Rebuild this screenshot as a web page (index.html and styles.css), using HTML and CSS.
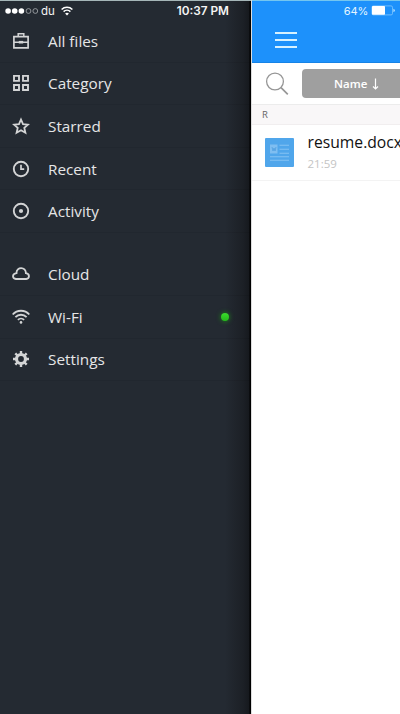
FILE: index.html
```
<!DOCTYPE html>
<html lang="en">
<head>
    <meta charset="UTF-8">
    <meta name="viewport" content="width=device-width, initial-scale=1.0">
    <title>Files</title>
    <link rel="stylesheet" href="styles.css">
</head>
<body>
    <div class="screen">
        <nav class="sidebar">
            <div class="status">
                <svg class="signal" width="34" height="8" viewBox="0 0 34 8">
                    <g fill="#fff">
                        <circle cx="3.1" cy="4" r="2.8"/>
                        <circle cx="9.7" cy="4" r="2.8"/>
                        <circle cx="16.4" cy="4" r="2.8"/>
                    </g>
                    <g fill="none" stroke="#a9adb1" stroke-width="0.8">
                        <circle cx="23.5" cy="4" r="2.4"/>
                        <circle cx="30.3" cy="4" r="2.4"/>
                    </g>
                </svg>
                <span class="carrier">du</span>
                <svg class="status-wifi" width="12" height="10" viewBox="0 0 12 10" fill="none" stroke="#fff" stroke-width="1.5">
                    <path d="M0.6 3.5C3.6 0.5 8.4 0.5 11.4 3.5"/>
                    <path d="M2.6 5.6C4.5 3.8 7.5 3.8 9.4 5.6"/>
                    <path d="M6 9.6L4.1 7.4C5.2 6.5 6.8 6.5 7.9 7.4Z" fill="#fff" stroke="none"/>
                </svg>
                <span class="time">10:37 PM</span>
            </div>
            <ul class="menu">
                <li>
                    <svg class="icon" viewBox="0 0 18 18" fill="none" stroke="#d3d4d5" stroke-width="1.7">
                        <path d="M1.9 4.6H16.1V15.9H1.9Z"/>
                        <path d="M6.2 4.4V1.7H11.8V4.4M2 10.2H16" stroke-width="1.5"/>
                        <path d="M6.8 8.9H11.2V11.5H6.8Z" fill="#d3d4d5" stroke="none"/>
                    </svg>
                    <span>All files</span>
                </li>
                <li>
                    <svg class="icon" viewBox="0 0 18 18" fill="none" stroke="#d3d4d5" stroke-width="1.9">
                        <path d="M2 1.9H7V6.9H2ZM11 1.9H16V6.9H11ZM2 11H7V16H2ZM11 11H16V16H11Z"/>
                    </svg>
                    <span>Category</span>
                </li>
                <li>
                    <svg class="icon" viewBox="0 0 18 18" fill="none" stroke="#d3d4d5" stroke-width="1.8">
                        <path d="M9 2.5L11 7.1L16 7.6L12.3 10.9L13.4 15.7L9 13.2L4.6 15.7L5.7 10.9L2 7.6L7 7.1Z"/>
                    </svg>
                    <span>Starred</span>
                </li>
                <li>
                    <svg class="icon" viewBox="0 0 18 18" fill="none" stroke="#d3d4d5" stroke-width="1.9">
                        <circle cx="9" cy="9" r="7.2"/>
                        <path d="M9 4.8V9.1H12.2" stroke-width="1.7"/>
                    </svg>
                    <span>Recent</span>
                </li>
                <li>
                    <svg class="icon" viewBox="0 0 18 18" fill="none" stroke="#d3d4d5" stroke-width="1.9">
                        <circle cx="9" cy="9" r="7.2"/>
                        <circle cx="9" cy="9" r="2.1" fill="#d3d4d5" stroke="none"/>
                    </svg>
                    <span>Activity</span>
                </li>
            </ul>
            <ul class="menu">
                <li>
                    <svg class="icon" viewBox="0 0 18 18" fill="none" stroke="#d3d4d5" stroke-width="1.8">
                        <path d="M4 14H14.2C18 13.4 17.9 8.8 13.9 8.2C14.1 1.4 4.3 1.4 4.5 8.1C0.1 8.6 -0.2 13.3 4 14Z"/>
                    </svg>
                    <span>Cloud</span>
                </li>
                <li>
                    <svg class="icon" viewBox="0 0 18 18" fill="none" stroke="#d3d4d5" stroke-width="1.8">
                        <path d="M0.7 6.5C5.2 1.5 12.8 1.5 17.3 6.5"/>
                        <path d="M3.4 9.2C6.5 5.9 11.5 5.9 14.6 9.2"/>
                        <path d="M5.9 11.9C7.7 10.1 10.3 10.1 12.1 11.9"/>
                        <circle cx="9" cy="14.4" r="1.3" fill="#d3d4d5" stroke="none"/>
                    </svg>
                    <span>Wi-Fi</span>
                    <i class="led"></i>
                </li>
                <li>
                    <svg class="icon" viewBox="0 0 18 18" fill="none" stroke="#d3d4d5">
                        <circle cx="9" cy="9" r="4.5" stroke-width="3.2"/>
                        <path d="M9 1V4M9 14V17M1 9H4M14 9H17M3.3 3.3L5.5 5.5M12.5 12.5L14.7 14.7M3.3 14.7L5.5 12.5M12.5 5.5L14.7 3.3" stroke-width="2.4"/>
                    </svg>
                    <span>Settings</span>
                </li>
            </ul>
        </nav>

        <main class="content">
            <header class="header">
                <div class="battery">
                    <span>64%</span>
                    <svg width="25" height="11" viewBox="0 0 25 11">
                        <rect x="0.9" y="0.9" width="20.6" height="9" rx="1.4" fill="none" stroke="#8fd0ff" stroke-width="0.7"/>
                        <rect x="1" y="1" width="13" height="8.8" rx="0.8" fill="#fff"/>
                        <path d="M22.5 3.7C24.2 4.2 24.2 6.6 22.5 7.1Z" fill="#d9f1ff"/>
                    </svg>
                </div>
                <div class="burger">
                    <i></i>
                    <i></i>
                    <i></i>
                </div>
            </header>
            <div class="toolbar">
                <svg class="search" width="24" height="24" viewBox="0 0 24 24" fill="none" stroke="#969696">
                    <circle cx="10" cy="9.5" r="8.4" stroke-width="1.3"/>
                    <path d="M16 15.7L22.8 22.3" stroke-width="1.7"/>
                </svg>
                <div class="sort">
                    <span>Name</span>
                    <svg width="7" height="12" viewBox="0 0 7 12" fill="none" stroke="#fff" stroke-width="1.2">
                        <path d="M3.5 0.5V11M1 8.5L3.5 11L6 8.5"/>
                    </svg>
                </div>
            </div>
            <div class="section">R</div>
            <div class="file">
                <svg class="thumb" width="29" height="29" viewBox="0 0 29 29">
                    <rect width="29" height="29" rx="1" fill="#50a6eb"/>
                    <rect x="5" y="6.5" width="7.5" height="9" fill="#7fbef1"/>
                    <path d="M7 9L8 13L9 10L10 13L11 9" fill="none" stroke="#4f9ee0" stroke-width="0.8"/>
                    <path d="M14.5 7.2H24M14.5 11.2H24M14.5 15.2H24M5 18.7H24M5 22.2H24" stroke="#84c2f4" stroke-width="1.1"/>
                </svg>
                <div class="info">
                    <div class="name">resume.docx</div>
                    <div class="date">21:59</div>
                </div>
            </div>
        </main>
    </div>
</body>
</html>
```
FILE: styles.css
```
* {
    box-sizing: border-box;
}

body {
    margin: 0;
    background-color: #fff;
    font-family: "Open Sans", "Noto Sans", sans-serif;
}

.screen {
    display: flex;
    width: 400px;
    height: 714px;
    overflow: hidden;
}

.sidebar {
    width: 251px;
    flex-shrink: 0;
    border-top: 1px solid #a5b6b8;
    background: linear-gradient(to right, #242a32 0, #242a32 225px, #1c2026 243px, #16191e 249px, #000 250px);
    color: #e6e6e7;
}

.status {
    display: flex;
    align-items: center;
    height: 19px;
    padding-left: 5px;
    font-family: Inter, "Liberation Sans", sans-serif;
    font-size: 11.5px;
    color: #f4f4f4;
}

.carrier {
    margin-left: 2px;
}

.status-wifi {
    margin-left: 6px;
}

.time {
    margin-left: auto;
    padding-right: 22px;
    font-size: 11.8px;
    font-weight: 600;
}

.menu {
    list-style: none;
    margin: 0 0 20.5px;
    padding: 0;
}

.menu li {
    display: flex;
    align-items: center;
    height: 42.6px;
    padding-left: 12px;
    border-bottom: 1px solid rgba(0, 0, 0, 0.06);
    font-size: 15.3px;
}

.icon {
    width: 18px;
    height: 18px;
    margin-right: 18px;
}

.led {
    width: 8px;
    height: 8px;
    margin-left: auto;
    margin-right: 22px;
    border-radius: 50%;
    background: linear-gradient(#3ade2c, #25b91b);
    box-shadow: 0 0 4px 1px #1f6a20;
}

.content {
    width: 149px;
    border-left: 1px solid #ddd;
    background-color: #fff;
    overflow: hidden;
}

.header {
    height: 63px;
    margin-left: -1px;
    background-color: #1d91fb;
    border-top: 1px solid #74c6f0;
    border-bottom: 1px solid #1683e6;
}

.battery {
    display: flex;
    align-items: center;
    justify-content: flex-end;
    gap: 3px;
    height: 19px;
    padding-right: 4px;
    font-family: Inter, "Liberation Sans", sans-serif;
    font-size: 11px;
    letter-spacing: -0.2px;
    color: #e4f5ff;
}

.burger {
    display: flex;
    flex-direction: column;
    gap: 5px;
    width: 22px;
    margin: 12px 0 0 24px;
}

.burger i {
    height: 2px;
    background-color: #d6f1ff;
}

.toolbar {
    display: flex;
    align-items: center;
    height: 42px;
    padding-left: 13px;
    border-bottom: 1px solid #ececec;
}

.search {
    flex-shrink: 0;
}

.sort {
    display: flex;
    align-items: center;
    flex-shrink: 0;
    gap: 5px;
    width: 120px;
    height: 29px;
    margin-left: 13px;
    padding-left: 32px;
    border-radius: 4px;
    background-color: #9f9f9f;
    color: #fff;
    font-size: 11.5px;
    font-weight: 600;
}

.section {
    height: 20px;
    padding-left: 10px;
    border-bottom: 1px solid #f1eeef;
    background-color: #f9f7f8;
    color: #666;
    font-size: 9.5px;
    line-height: 20px;
}

.file {
    display: flex;
    align-items: center;
    height: 56px;
    padding-left: 13px;
    border-bottom: 1px solid #f3f3f3;
}

.thumb {
    flex-shrink: 0;
    margin-right: 13.5px;
}

.name {
    color: #111;
    font-size: 15.7px;
    line-height: 21px;
    white-space: nowrap;
}

.date {
    color: #c4c4c4;
    font-size: 11.5px;
    line-height: 21px;
}
```
